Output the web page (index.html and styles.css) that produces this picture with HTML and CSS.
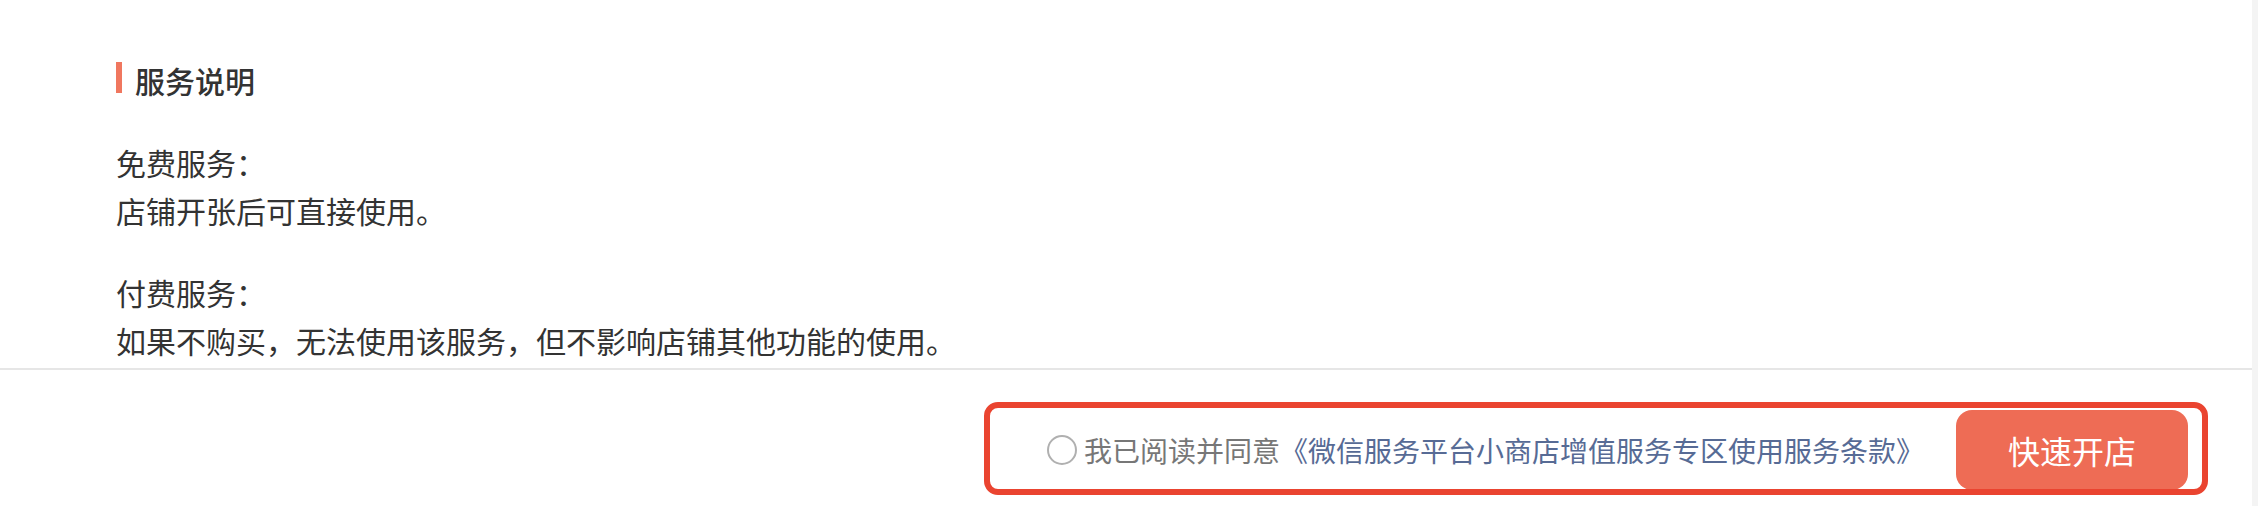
FILE: index.html
```html
<!DOCTYPE html>
<html lang="zh-CN">
<head>
<meta charset="utf-8">
<title>服务说明</title>
<link rel="stylesheet" href="styles.css">
</head>
<body>
<div class="page">
  <div class="main">
    <section class="content">
      <h2 class="title">服务说明</h2>
      <div class="para">
        <p>免费服务：</p>
        <p>店铺开张后可直接使用。</p>
      </div>
      <div class="para">
        <p>付费服务：</p>
        <p>如果不购买，无法使用该服务，但不影响店铺其他功能的使用。</p>
      </div>
    </section>
    <footer class="footer">
      <div class="actions">
        <label class="agree">
          <span class="radio"></span>
          <span class="agree-text">我已阅读并同意</span><a class="link">《微信服务平台小商店增值服务专区使用服务条款》</a>
        </label>
        <button class="btn">快速开店</button>
        <div class="highlight"></div>
      </div>
    </footer>
  </div>
  <div class="scroll-track"></div>
</div>
</body>
</html>
```

FILE: styles.css
```css
html, body {
  margin: 0;
  padding: 0;
  background: #ffffff;
}

body {
  font-family: "Noto Sans CJK SC", "Noto Sans", sans-serif;
  color: #333333;
}

.page {
  display: flex;
  height: 506px;
}

.main {
  flex: 1;
  display: flex;
  flex-direction: column;
  min-width: 0;
}

.content {
  padding: 62px 0 4px 116px;
  border-bottom: 2px solid #e6e6e6;
}

.title {
  display: flex;
  align-items: flex-start;
  margin: 0;
  font-size: 30px;
  line-height: 36px;
  font-weight: 500;
  color: #333333;
}

.title::before {
  content: "";
  width: 6px;
  height: 31px;
  background: #f0775f;
  margin-right: 13px;
  flex: none;
}

.para {
  margin-top: 40px;
}

.para + .para {
  margin-top: 34px;
}

.para p {
  margin: 0;
  font-size: 30px;
  line-height: 48px;
  color: #333333;
}

.footer {
  flex: 1;
  display: flex;
  justify-content: flex-end;
  align-items: flex-start;
  padding: 40px 64px 0 0;
}

.actions {
  position: relative;
  display: flex;
  align-items: center;
}

.agree {
  display: flex;
  align-items: center;
  font-size: 28px;
  white-space: nowrap;
}

.radio {
  width: 30px;
  height: 30px;
  box-sizing: border-box;
  border: 2px solid #b0b0b0;
  border-radius: 50%;
  margin-right: 7px;
  flex: none;
}

.agree-text {
  color: #777777;
}

.link {
  color: #576b95;
  text-decoration: none;
}

.btn {
  width: 232px;
  height: 80px;
  margin-left: 32px;
  border: none;
  border-radius: 16px;
  background: #ee6c55;
  color: #ffffff;
  font-family: "Noto Sans CJK SC", "Noto Sans", sans-serif;
  font-size: 32px;
  padding: 0;
}

.highlight {
  position: absolute;
  left: -63px;
  right: -20px;
  top: -8px;
  bottom: -5px;
  border: 6px solid #ea4430;
  border-radius: 14px;
  pointer-events: none;
}

.scroll-track {
  width: 6px;
  flex: none;
  background: #f4f4f4;
}
```
